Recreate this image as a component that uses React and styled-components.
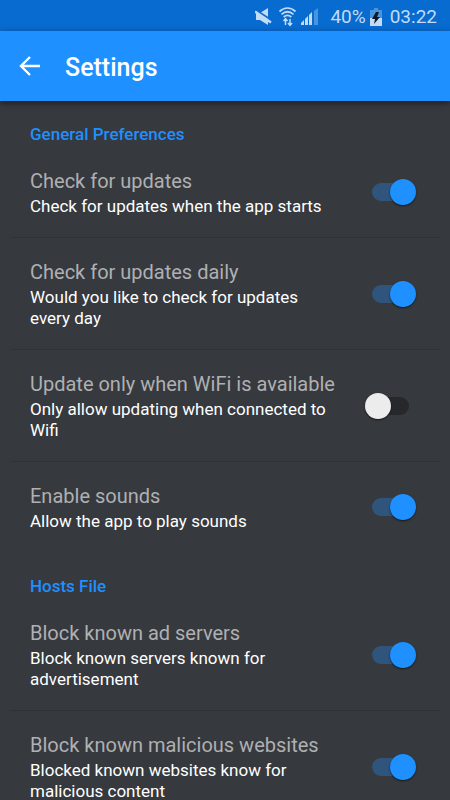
import React, { useState } from "react";
import styled, { createGlobalStyle } from "styled-components";

const GlobalStyle = createGlobalStyle`
  html {
    scrollbar-width: none;
  }
  body {
    margin: 0;
    background: #36393e;
    font-family: Roboto, sans-serif;
  }
`;

const Container = styled.div`
  min-height: 100vh;
  background: #36393e;
`;

const StatusBar = styled.div`
  display: flex;
  align-items: center;
  justify-content: flex-end;
  height: 31px;
  padding: 2px 13px 0 0;
  box-sizing: border-box;
  background: #076bd0;
  color: #c3dbf4;
  font-size: 19px;
`;

const StatusIcons = styled.svg`
  display: block;
  margin-right: 11px;
`;

const Battery = styled.svg`
  display: block;
  margin: 0 8px 0 4px;
`;

const AppBar = styled.header`
  position: relative;
  display: flex;
  align-items: center;
  height: 70px;
  padding: 0 18px;
  background: #1e90ff;
  box-shadow: 0 2px 6px rgba(0, 0, 0, 0.5);
`;

const BackButton = styled.button`
  display: flex;
  padding: 0;
  border: none;
  background: none;
  color: white;
  cursor: pointer;
`;

const Title = styled.h1`
  margin: 2px 0 0 23px;
  color: white;
  font-size: 25px;
  font-weight: 500;
`;

const Section = styled.section``;

const SectionTitle = styled.h2`
  margin: 0;
  padding: 22px 30px 2px;
  color: #1e90ff;
  font-size: 17px;
  font-weight: 500;
  line-height: 22px;
`;

const List = styled.div`
  margin: 0 10px;
  padding-bottom: 1px;
`;

const Row = styled.label`
  display: flex;
  align-items: center;
  gap: 24px;
  padding: 20px 24px 20px 20px;
  cursor: pointer;
  & + & {
    border-top: 1px solid #2f3236;
  }
`;

const Info = styled.span`
  flex: 1;
  display: flex;
  flex-direction: column;
  gap: 3px;
  padding-top: 2px;
`;

const Name = styled.span`
  color: #afb0b2;
  font-size: 20px;
  line-height: 24px;
`;

const Description = styled.span`
  color: white;
  font-size: 17px;
  line-height: 21px;
`;

const Switch = styled.input`
  appearance: none;
  position: relative;
  flex-shrink: 0;
  width: 51px;
  height: 26px;
  margin: 0;
  cursor: pointer;
  &::before {
    content: "";
    position: absolute;
    top: 4px;
    left: 7px;
    width: 37px;
    height: 18px;
    border-radius: 9px;
    background: #26282b;
  }
  &::after {
    content: "";
    position: absolute;
    top: 0;
    left: 0;
    width: 26px;
    height: 26px;
    border-radius: 50%;
    background: #ececec;
    box-shadow: 0 1px 2px rgba(0, 0, 0, 0.6);
  }
  &:checked::before {
    background: #2f557d;
  }
  &:checked::after {
    left: 25px;
    background: #1e90ff;
  }
`;

const sections = [
  {
    title: "General Preferences",
    items: [
      {
        name: "Check for updates",
        description: "Check for updates when the app starts",
        on: true,
      },
      {
        name: "Check for updates daily",
        description: "Would you like to check for updates every day",
        on: true,
      },
      {
        name: "Update only when WiFi is available",
        description: "Only allow updating when connected to Wifi",
        on: false,
      },
      {
        name: "Enable sounds",
        description: "Allow the app to play sounds",
        on: true,
      },
    ],
  },
  {
    title: "Hosts File",
    items: [
      {
        name: "Block known ad servers",
        description: "Block known servers known for advertisement",
        on: true,
      },
      {
        name: "Block known malicious websites",
        description: "Blocked known websites know for malicious content",
        on: true,
      },
    ],
  },
];

const Setting = ({ item }) => {
  const [on, setOn] = useState(item.on);
  return (
    <Row>
      <Info>
        <Name>{item.name}</Name>
        <Description>{item.description}</Description>
      </Info>
      <Switch
        type="checkbox"
        checked={on}
        onChange={(e) => setOn(e.target.checked)}
      />
    </Row>
  );
};

const App = () => {
  return (
    <Container>
      <GlobalStyle />
      <StatusBar>
        <StatusIcons width="64" height="20" viewBox="0 0 64 20" fill="none">
          {/* muted speaker */}
          <path d="M1 6h4l8-5v17l-8-5H1z" fill="#c3dbf4" />
          <path d="M0 2.500l17 11" stroke="#076bd0" strokeWidth="2" />
          <path d="M0 4.500l16 11" stroke="#c3dbf4" strokeWidth="2.4" />
          {/* wifi with traffic arrows */}
          <g stroke="#c3dbf4" strokeWidth="1.7">
            <path d="M24.500 4.500c5-4.400 11-4.400 16 0" />
            <path d="M26.500 7.300c4-3.400 8-3.400 12 0" />
            <path d="M28.700 10c2.500-2.200 5.100-2.200 7.600 0" />
          </g>
          <path
            d="M30.500 18v-6M28.500 14l2-2.400 2 2.400M35 12v6M33 16l2 2.400 2-2.400"
            stroke="#c3dbf4"
            strokeWidth="1.5"
          />
          {/* signal bars */}
          <path
            d="M46 18v-2l3-3v5zM50 18v-6l3-3v9zM54 18V8l3-3v13z"
            fill="#c3dbf4"
          />
          <path d="M59 18V4l4-3v17z" fill="#4a94de" />
        </StatusIcons>
        <span>40%</span>
        <Battery width="12" height="18" viewBox="0 0 12 18">
          <path d="M4 0h4v2h4v9H0V2h4z" fill="#4a94de" />
          <path d="M0 10h12v8H0z" fill="#c3dbf4" />
          <path d="M6 4L2 11h3l-1 5 6-7H7l2-5z" fill="#0b1a2b" />
        </Battery>
        <span>03:22</span>
      </StatusBar>
      <AppBar>
        <BackButton aria-label="Back">
          <svg width="24" height="24" viewBox="0 0 24 24" fill="none">
            <path
              d="M22 12H3.500M12 3l-9 9 9 9"
              stroke="currentColor"
              strokeWidth="2.4"
            />
          </svg>
        </BackButton>
        <Title>Settings</Title>
      </AppBar>
      {sections.map((section) => (
        <Section key={section.title}>
          <SectionTitle>{section.title}</SectionTitle>
          <List>
            {section.items.map((item) => (
              <Setting key={item.name} item={item} />
            ))}
          </List>
        </Section>
      ))}
    </Container>
  );
};

export default App;
